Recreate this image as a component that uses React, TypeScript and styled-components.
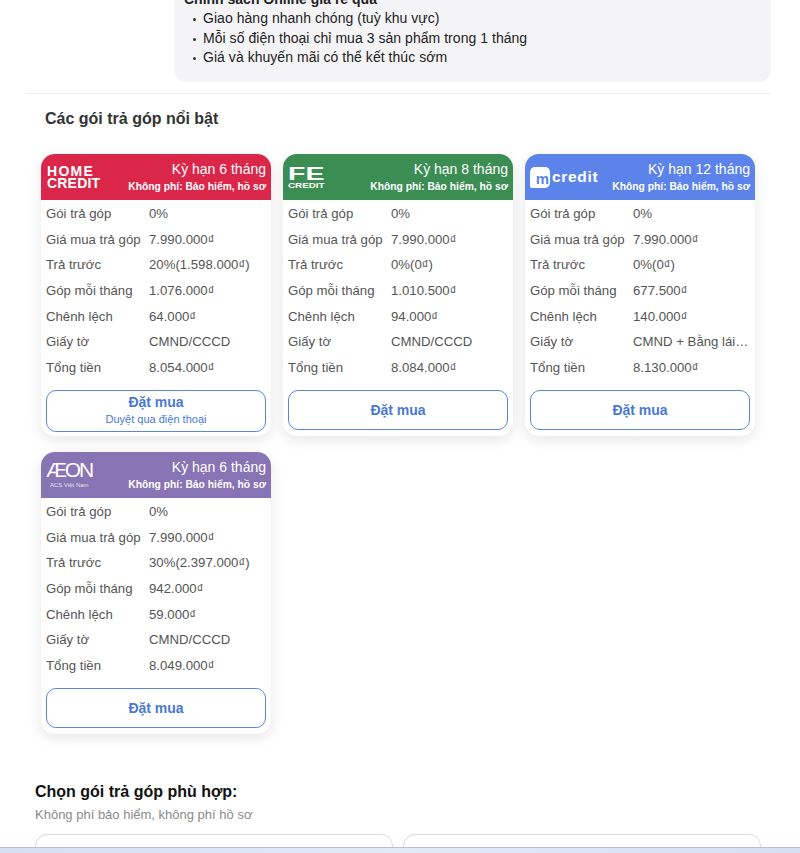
import React from "react";
import styled, { createGlobalStyle } from "styled-components";

interface Plan {
    brand: "home" | "fe" | "mcredit" | "aeon";
    term: string;
    downPayment: string;
    monthly: string;
    diff: string;
    papers: string;
    total: string;
    note?: string;
}

const plans: Plan[] = [
    { brand: "home", term: "Kỳ hạn 6 tháng", downPayment: "20%(1.598.000₫)", monthly: "1.076.000₫", diff: "64.000₫", papers: "CMND/CCCD", total: "8.054.000₫", note: "Duyệt qua điện thoại" },
    { brand: "fe", term: "Kỳ hạn 8 tháng", downPayment: "0%(0₫)", monthly: "1.010.500₫", diff: "94.000₫", papers: "CMND/CCCD", total: "8.084.000₫" },
    { brand: "mcredit", term: "Kỳ hạn 12 tháng", downPayment: "0%(0₫)", monthly: "677.500₫", diff: "140.000₫", papers: "CMND + Bằng lái xe máy", total: "8.130.000₫" },
    { brand: "aeon", term: "Kỳ hạn 6 tháng", downPayment: "30%(2.397.000₫)", monthly: "942.000₫", diff: "59.000₫", papers: "CMND/CCCD", total: "8.049.000₫" },
];

const brandColors = {
    home: "#da2648",
    fe: "#3c8d53",
    mcredit: "#5b83ea",
    aeon: "#8873b4",
};

const GlobalStyle = createGlobalStyle`
    html, body {
        margin: 0;
        padding: 0;
        background: #fff;
        overflow: hidden;
    }
    body {
        font-family: "Liberation Sans", Arial, sans-serif;
    }
`;

const Page = styled.div`
    height: 853px;
    overflow: hidden;
    padding: 0 29px 0 26px;
`;

const Notes = styled.div`
    margin: -11px 0 0 148px;
    padding: 0 0 0 16px;
    height: 93px;
    box-sizing: border-box;
    background: #f4f4f6;
    border-radius: 0 0 12px 12px;
    color: #222;
    font-size: 14px;
    line-height: 19.6px;
`;

const NotesTitle = styled.div`
    font-weight: bold;
    padding-top: 2px;
    height: 17px;
    line-height: 16px;
    margin-left: -6px;
    margin-bottom: 1px;
    color: #222;
`;

const NotesList = styled.ul`
    margin: 0;
    padding: 0 0 0 13px;
    list-style: none;
    li {
        position: relative;
        letter-spacing: 0.04px;
    }
    li::before {
        content: "";
        position: absolute;
        left: -10px;
        top: 9px;
        width: 3px;
        height: 3px;
        border-radius: 50%;
        background: #333;
    }
`;

const Divider = styled.div`
    height: 1px;
    margin-top: 11px;
    background: #ececec;
`;

const Featured = styled.section`
    padding: 0 0 0 15px;
`;

const FeaturedTitle = styled.h3`
    margin: 15px 0 0 4px;
    height: 19px;
    line-height: 19px;
    font-size: 16px;
    font-weight: bold;
    color: #333;
`;

const Grid = styled.div`
    display: grid;
    grid-template-columns: repeat(3, 230px);
    gap: 16px 12px;
    margin-top: 26px;
`;

const Card = styled.article`
    display: flex;
    flex-direction: column;
    height: 282px;
    background: #fff;
    border-radius: 14px;
    box-shadow: 0 4px 14px rgba(0, 0, 0, 0.1);
    overflow: hidden;
`;

const CardHead = styled.header<{ $brand: Plan["brand"] }>`
    display: flex;
    align-items: center;
    justify-content: space-between;
    height: 46px;
    padding: 0 5px 0 6px;
    background: ${(p) => brandColors[p.$brand]};
    color: #fff;
`;

const Terms = styled.div`
    padding-top: 1px;
    text-align: right;
    white-space: nowrap;
`;

const Term = styled.div`
    font-size: 14px;
    line-height: 18px;
`;

const Fee = styled.div`
    font-size: 10.3px;
    font-weight: bold;
    line-height: 18px;
`;

const HomeLogo = styled.div`
    font-size: 14px;
    font-weight: bold;
    line-height: 11.5px;
    margin-top: 1px;
    span {
        display: block;
        letter-spacing: 0.2px;
    }
    span:first-child {
        letter-spacing: 1.3px;
    }
`;

const FeLogo = styled.div`
    margin-left: -1px;
    margin-top: 2px;
    font-weight: bold;
    span {
        display: block;
        transform-origin: left;
    }
    span:first-child {
        font-size: 19px;
        line-height: 16px;
        transform: scaleX(1.5);
    }
    span:last-child {
        font-size: 7px;
        line-height: 8px;
        transform: scaleX(1.4);
    }
`;

const McreditLogo = styled.div`
    display: flex;
    align-items: center;
    gap: 2px;
    margin-left: -1px;
    font-size: 15.5px;
    font-weight: bold;
    letter-spacing: 0.7px;
`;

const McreditBadge = styled.span`
    display: flex;
    align-items: flex-end;
    justify-content: flex-end;
    box-sizing: border-box;
    width: 20px;
    height: 21px;
    padding-right: 1px;
    border-radius: 5px 5px 5px 2px;
    background: #fff;
    color: #5b83ea;
    font-size: 15px;
    line-height: 18px;
    letter-spacing: 0;
`;

const AeonLogo = styled.div`
    font-weight: normal;
    margin-left: -1px;
    span {
        display: block;
    }
    span:first-child {
        font-size: 21px;
        line-height: 20px;
        letter-spacing: -2.2px;
    }
    span:last-child {
        font-size: 6px;
        line-height: 10px;
        margin-left: 4px;
        opacity: 0.8;
    }
`;

const Rows = styled.dl`
    margin: 0;
    padding: 0 5px;
`;

const Row = styled.div`
    display: grid;
    grid-template-columns: 103px minmax(0, 1fr);
    height: 25.67px;
    line-height: 27px;
    font-size: 13.2px;
    color: #555;
    white-space: nowrap;
`;

const Label = styled.dt`
    margin: 0;
`;

const Value = styled.dd`
    margin: 0;
    overflow: hidden;
    text-overflow: ellipsis;
`;

const BuyButton = styled.button<{ $tall: boolean }>`
    display: flex;
    flex-direction: column;
    align-items: center;
    justify-content: center;
    gap: 3px;
    box-sizing: border-box;
    width: 220px;
    height: ${(p) => (p.$tall ? "42px" : "40px")};
    margin: 10px 5px 0;
    padding: 0 0 ${(p) => (p.$tall ? "2px" : "0")};
    border: 1px solid #5a85dc;
    border-radius: 10px;
    background: #fff;
    color: #4a78d6;
    font-family: inherit;
    font-size: 14px;
    font-weight: bold;
    line-height: 16px;
    small {
        font-size: 11px;
        font-weight: normal;
        line-height: 12px;
    }
`;

const Choose = styled.section`
    margin: 48px 0 0 9px;
`;

const ChooseTitle = styled.h3`
    margin: 0;
    font-size: 16px;
    line-height: 19px;
    font-weight: bold;
    color: #111;
`;

const ChooseSub = styled.p`
    margin: 5px 0 0;
    font-size: 13px;
    line-height: 18px;
    color: #8a8a8a;
`;

const Options = styled.div`
    display: grid;
    grid-template-columns: repeat(2, 358px);
    gap: 10px;
    margin-top: 10px;
`;

const Option = styled.div`
    height: 60px;
    box-sizing: border-box;
    border: 1px solid #d9d9dd;
    border-radius: 12px;
`;

const BottomBar = styled.div`
    position: fixed;
    left: 0;
    right: 0;
    bottom: 0;
    height: 5px;
    border-top: 1px solid #b9bfd6;
    background: linear-gradient(90deg, #d5e0f5, #e2e9f8 50%, #d5e0f5);
`;

const Logo = ({ brand }: { brand: Plan["brand"] }) => {
    if (brand === "home") {
        return (
            <HomeLogo>
                <span>HOME</span>
                <span>CREDIT</span>
            </HomeLogo>
        );
    }
    if (brand === "fe") {
        return (
            <FeLogo>
                <span>FE</span>
                <span>CREDIT</span>
            </FeLogo>
        );
    }
    if (brand === "mcredit") {
        return (
            <McreditLogo>
                <McreditBadge>m</McreditBadge>
                credit
            </McreditLogo>
        );
    }
    return (
        <AeonLogo>
            <span>ÆON</span>
            <span>ACS Việt Nam</span>
        </AeonLogo>
    );
};

const PlanCard = ({ plan }: { plan: Plan }) => {
    const rows = [
        ["Gói trả góp", "0%"],
        ["Giá mua trả góp", "7.990.000₫"],
        ["Trả trước", plan.downPayment],
        ["Góp mỗi tháng", plan.monthly],
        ["Chênh lệch", plan.diff],
        ["Giấy tờ", plan.papers],
        ["Tổng tiền", plan.total],
    ];
    return (
        <Card>
            <CardHead $brand={plan.brand}>
                <Logo brand={plan.brand} />
                <Terms>
                    <Term>{plan.term}</Term>
                    <Fee>Không phí: Bảo hiểm, hồ sơ</Fee>
                </Terms>
            </CardHead>
            <Rows>
                {rows.map(([label, value]) => (
                    <Row key={label}>
                        <Label>{label}</Label>
                        <Value>{value}</Value>
                    </Row>
                ))}
            </Rows>
            <BuyButton $tall={!!plan.note}>
                Đặt mua
                {plan.note && <small>{plan.note}</small>}
            </BuyButton>
        </Card>
    );
};

const App = () => (
    <>
        <GlobalStyle />
        <Page>
            <Notes>
                <NotesTitle>Chính sách Online giá rẻ quá</NotesTitle>
                <NotesList>
                    <li>Giao hàng nhanh chóng (tuỳ khu vực)</li>
                    <li>Mỗi số điện thoại chỉ mua 3 sản phẩm trong 1 tháng</li>
                    <li>Giá và khuyến mãi có thể kết thúc sớm</li>
                </NotesList>
            </Notes>
            <Divider />
            <Featured>
                <FeaturedTitle>Các gói trả góp nổi bật</FeaturedTitle>
                <Grid>
                    {plans.map((plan) => (
                        <PlanCard key={plan.brand} plan={plan} />
                    ))}
                </Grid>
            </Featured>
            <Choose>
                <ChooseTitle>Chọn gói trả góp phù hợp:</ChooseTitle>
                <ChooseSub>Không phí bảo hiểm, không phí hồ sơ</ChooseSub>
                <Options>
                    <Option />
                    <Option />
                </Options>
            </Choose>
        </Page>
        <BottomBar />
    </>
);

export default App;
